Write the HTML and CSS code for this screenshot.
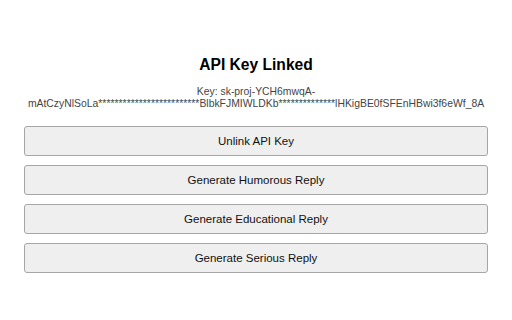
FILE: index.html
```html
<!DOCTYPE html>
<html>
<head>
<meta charset="utf-8">
<link rel="stylesheet" href="styles.css">
</head>
<body>
<div class="panel">
  <h2 class="title">API Key Linked</h2>
  <p class="key">Key: sk-proj-YCH6mwqA-mAtCzyNlSoLa*************************BlbkFJMIWLDKb**************lHKigBE0fSFEnHBwi3f6eWf_8A</p>
  <div class="actions">
    <button class="btn">Unlink API Key</button>
    <button class="btn">Generate Humorous Reply</button>
    <button class="btn">Generate Educational Reply</button>
    <button class="btn">Generate Serious Reply</button>
  </div>
</div>
</body>
</html>
```
FILE: styles.css
```css
html, body {
  margin: 0;
  background: #fff;
}
body {
  padding: 8px;
  font-family: "Liberation Sans", Arial, sans-serif;
}
.panel {
  padding: 0 16px;
  text-align: center;
}
.title {
  margin: 47px 0 0;
  font-size: 15.6px;
  line-height: 20px;
  font-weight: bold;
  color: #000;
}
.key {
  margin: 11px 0 0;
  font-size: 10.4px;
  line-height: 12px;
  color: #444;
}
.actions {
  margin-top: 16px;
  display: flex;
  flex-direction: column;
  gap: 9px;
}
.btn {
  height: 30px;
  width: 100%;
  background: #efefef;
  border: 1px solid #a6a6a6;
  border-radius: 3px;
  font-family: "Liberation Sans", Arial, sans-serif;
  font-size: 11.5px;
  color: #111;
  padding: 0;
}
```
